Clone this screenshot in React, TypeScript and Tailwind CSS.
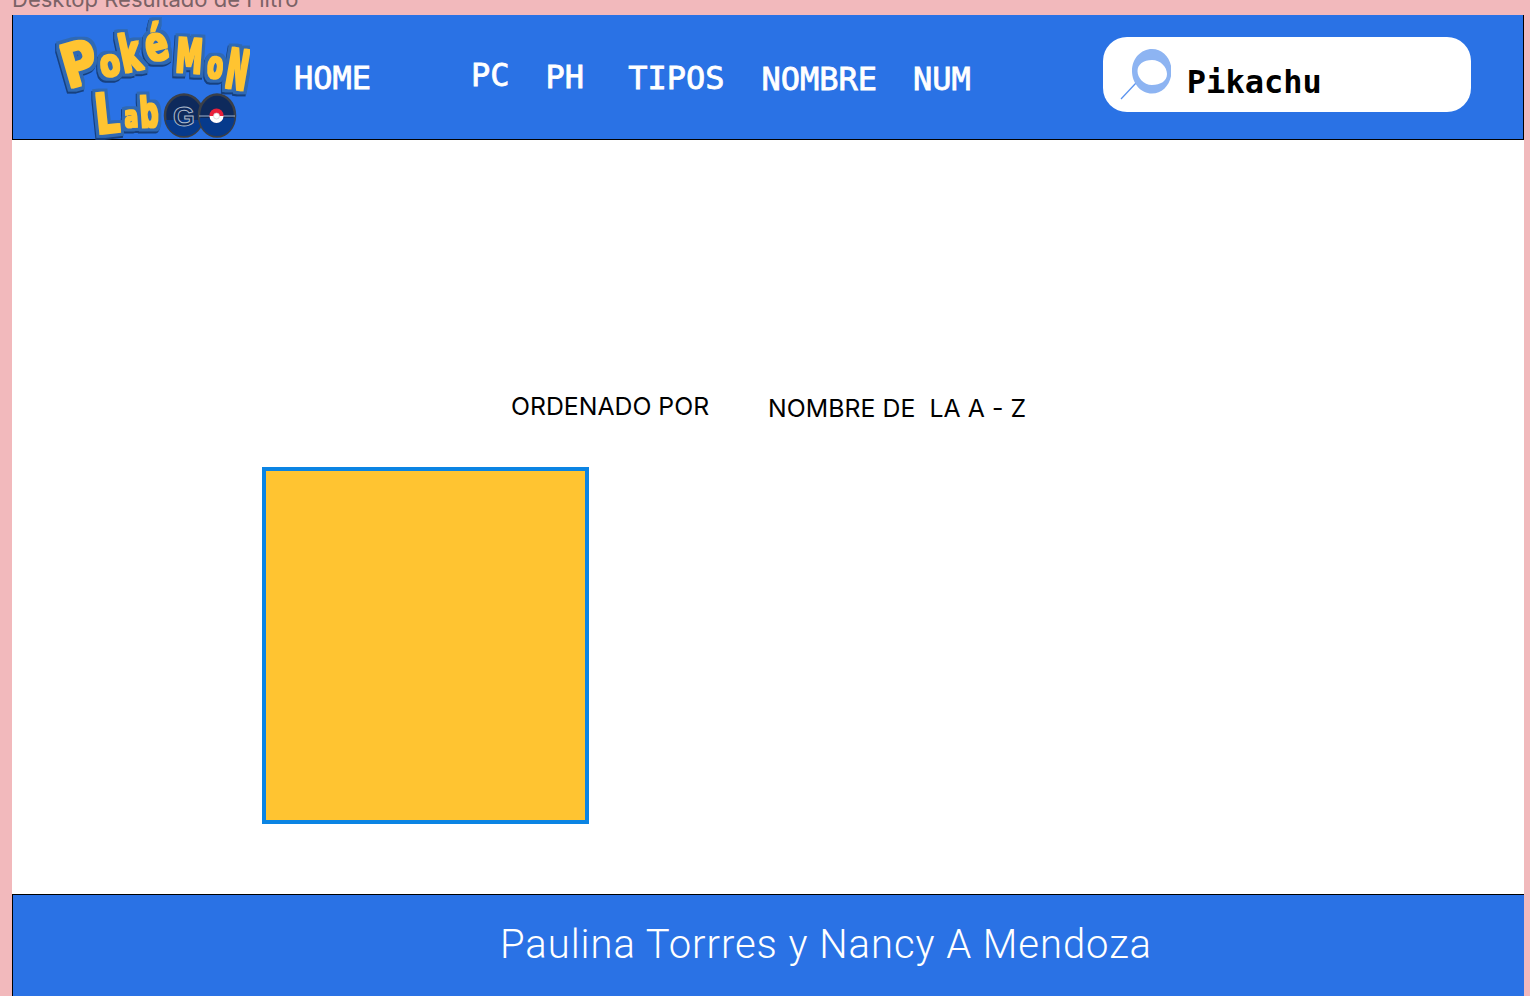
const L = ({ x, y, s, r = 0, sx = 1, c }: { x: number; y: number; s: number; r?: number; sx?: number; c: string }) => (
  <text
    transform={`translate(${x} ${y}) rotate(${r}) scale(${sx} 1)`}
    fontFamily="'DejaVu Sans', sans-serif"
    fontWeight="700"
    fontSize={s}
    fill="#ffc431"
    textAnchor="middle"
  >
    {c}
  </text>
);

function Logo() {
  return (
    <svg viewBox="50 15 200 125" className="w-[200px] h-[125px] shrink-0 block">
      <defs>
        <filter id="pk" x="-10%" y="-10%" width="120%" height="120%" colorInterpolationFilters="sRGB">
          <feMorphology in="SourceAlpha" operator="dilate" radius="1.200" result="a1" />
          <feFlood floodColor="#ffc431" />
          <feComposite in2="a1" operator="in" result="yellow" />
          <feMorphology in="SourceAlpha" operator="dilate" radius="4" result="a2" />
          <feFlood floodColor="#2f69b4" />
          <feComposite in2="a2" operator="in" result="blue" />
          <feOffset in="a2" dx="-1.500" dy="2" result="a3" />
          <feFlood floodColor="#16407f" />
          <feComposite in2="a3" operator="in" result="dark" />
          <feMerge>
            <feMergeNode in="dark" />
            <feMergeNode in="blue" />
            <feMergeNode in="yellow" />
          </feMerge>
        </filter>
      </defs>
      <g filter="url(#pk)">
        <L x={85} y={84} s={60} r={-16} sx={0.82} c="P" />
        <L x={112} y={76} s={38} r={-10} sx={0.78} c="o" />
        <L x={134} y={71} s={52} r={-12} sx={0.6} c="k" />
        <L x={160} y={60} s={48} r={-14} sx={0.7} c="é" />
        <L x={188} y={73} s={48} r={4} sx={0.56} c="M" />
        <L x={214} y={78} s={38} r={6} sx={0.6} c="o" />
        <L x={234} y={89} s={56} r={10} sx={0.46} c="N" />
        <L x={109} y={133} s={56} r={-6} sx={0.68} c="L" />
        <L x={132} y={127} s={30} r={-4} sx={0.66} c="a" />
        <L x={150} y={127} s={42} r={-4} sx={0.62} c="b" />
      </g>
      <ellipse cx="184" cy="115.500" rx="19" ry="21" fill="#0e2a5c" stroke="#3a3f48" strokeWidth="2.500" />
      <path d="M165.500 120c2 10 9 16 18.500 16s16.500-6 18.500-16z" fill="#063a8c" />
      <ellipse cx="217" cy="115.500" rx="18" ry="21" fill="#0e2a5c" stroke="#3a3f48" strokeWidth="2.500" />
      <path d="M199.500 118c1 11 8 18 17.500 18s16.500-7 17.500-18z" fill="#063a8c" />
      <line x1="199" y1="116" x2="235" y2="116" stroke="#9fb3cc" strokeWidth="1" />
      <text x="184" y="126" textAnchor="middle" fontFamily="'Liberation Sans', sans-serif" fontWeight="700" fontSize="28" fill="#0e2a5c" stroke="#aebccd" strokeWidth="1">
        G
      </text>
      <circle cx="216.500" cy="115.500" r="7" fill="#e8203a" />
      <path d="M209.500 116a7 7 0 0 0 14 0z" fill="#fff" />
      <circle cx="216.500" cy="116" r="3" fill="#fff" stroke="#c9c9c9" strokeWidth="0.600" />
    </svg>
  );
}

function SearchIcon() {
  return (
    <svg viewBox="0 0 52 52" className="w-[52px] h-[52px] shrink-0 block">
      <line x1="2" y1="50" x2="17" y2="34" stroke="#5a93ef" strokeWidth="1.200" />
      <path
        fillRule="evenodd"
        fill="#8db4f2"
        d="M33 0c11 0 19.500 9.500 19.500 22S44 44.500 33 44.500 13 34.500 13 22 22 0 33 0zM33 11c-8.500 0-14.500 4.500-14.500 11S24.500 36 33 36s15-4 15-11-6.500-14-15-14z"
      />
    </svg>
  );
}

export default function App() {
  const nav = "font-['DejaVu_Sans_Mono',monospace] font-normal text-[32px] leading-[38px] text-white shrink-0 [-webkit-text-stroke:0.8px_white]";
  return (
    <div className="h-[996px] w-[1530px] overflow-hidden bg-[#f2b9bc] pl-[12px] pr-[6px] flex flex-col">
      <div className="h-[15px] shrink-0 overflow-hidden flex items-end">
        <span className="font-['Inter',sans-serif] text-[22px] leading-[26px] text-[#7b6266] whitespace-nowrap mb-[3px]">
          Desktop Resultado de Filtro
        </span>
      </div>
      <div className="flex flex-col flex-1 bg-white min-h-0">
        <header className="h-[125px] shrink-0 bg-[#2a72e5] border border-t-0 border-black flex items-start pl-[37px]">
          <Logo />
          <span className={`${nav} ml-[44px] mt-[44px]`}>HOME</span>
          <span className={`${nav} ml-[100px] mt-[41px]`}>PC</span>
          <span className={`${nav} ml-[36px] mt-[43px]`}>PH</span>
          <span className={`${nav} ml-[44px] mt-[44px]`}>TIPOS</span>
          <span className={`${nav} ml-[37px] mt-[45px]`}>NOMBRE</span>
          <span className={`${nav} ml-[36px] mt-[45px]`}>NUM</span>
          <div className="ml-[132px] mt-[22px] w-[368px] h-[75px] bg-white rounded-[24px] flex items-start pl-[16px]">
            <div className="mt-[12px]">
              <SearchIcon />
            </div>
            <span className="ml-[16px] mt-[26px] font-['DejaVu_Sans_Mono',monospace] font-bold text-[32px] leading-[38px] text-black">
              Pikachu
            </span>
          </div>
        </header>
        <main className="flex-1 min-h-0 pl-[250px] pt-[250px]">
          <div className="flex items-start h-[77px] font-['Inter',sans-serif] text-[24.800px] leading-[30px] text-black whitespace-pre">
            <span className="ml-[249px] mt-[1px]">ORDENADO POR</span>
            <span className="ml-[59px] mt-[3px] tracking-[0.05px]">NOMBRE DE  LA A - Z</span>
          </div>
          <div className="w-[327px] h-[357px] bg-[#ffc431] border-4 border-[#0b84e3]" />
        </main>
        <footer className="h-[102px] shrink-0 bg-[#2a72e5] border-t border-l border-black flex items-start pl-[487px] pt-[24px]">
          <span className="font-['Roboto',sans-serif] font-light tracking-[0.95px] text-[40px] leading-[52px] text-white whitespace-nowrap">
            Paulina Torrres y Nancy A Mendoza
          </span>
        </footer>
      </div>
    </div>
  );
}
